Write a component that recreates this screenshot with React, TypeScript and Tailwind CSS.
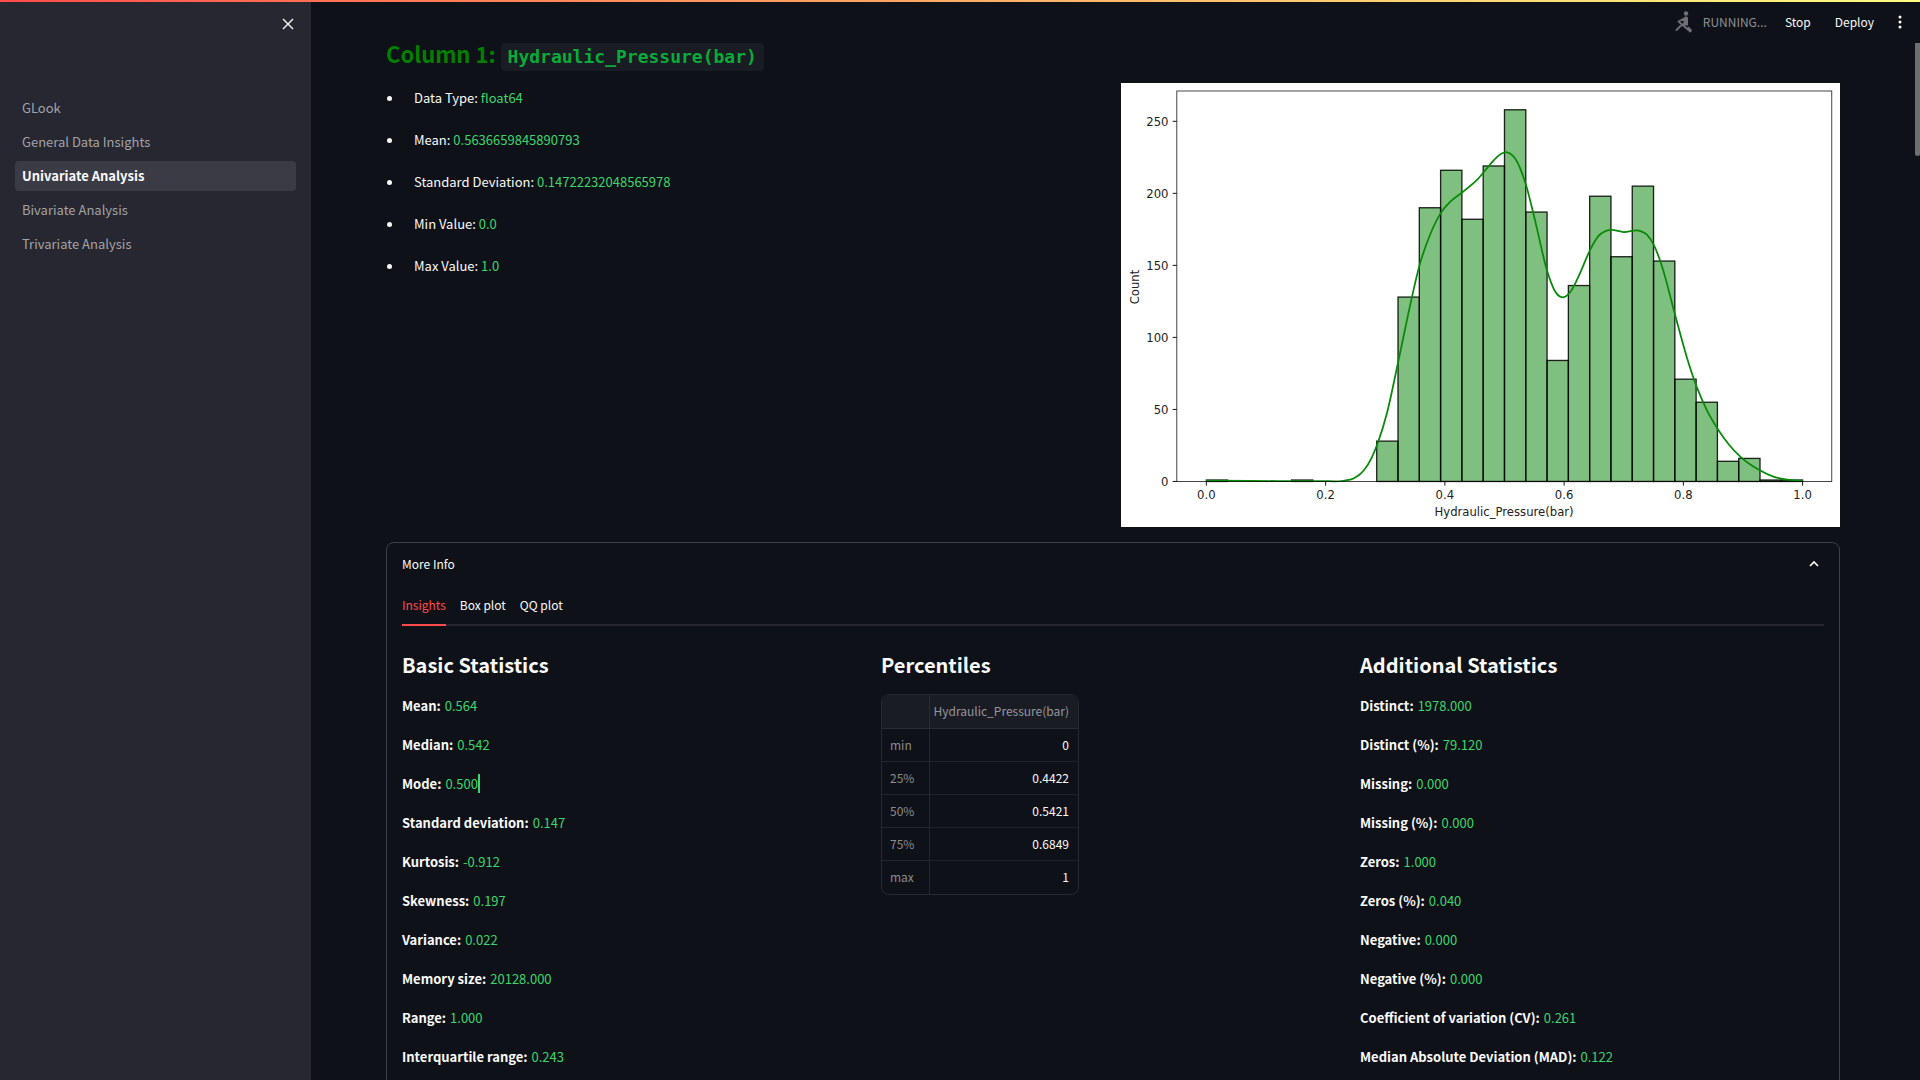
import React from "react";

const navItems = [
  { label: "GLook", active: false },
  { label: "General Data Insights", active: false },
  { label: "Univariate Analysis", active: true },
  { label: "Bivariate Analysis", active: false },
  { label: "Trivariate Analysis", active: false },
];

const summary = [
  ["Data Type:", "float64"],
  ["Mean:", "0.5636659845890793"],
  ["Standard Deviation:", "0.14722232048565978"],
  ["Min Value:", "0.0"],
  ["Max Value:", "1.0"],
];

const basicStats = [
  ["Mean:", "0.564"],
  ["Median:", "0.542"],
  ["Mode:", "0.500"],
  ["Standard deviation:", "0.147"],
  ["Kurtosis:", "-0.912"],
  ["Skewness:", "0.197"],
  ["Variance:", "0.022"],
  ["Memory size:", "20128.000"],
  ["Range:", "1.000"],
  ["Interquartile range:", "0.243"],
];

const additionalStats = [
  ["Distinct:", "1978.000"],
  ["Distinct (%):", "79.120"],
  ["Missing:", "0.000"],
  ["Missing (%):", "0.000"],
  ["Zeros:", "1.000"],
  ["Zeros (%):", "0.040"],
  ["Negative:", "0.000"],
  ["Negative (%):", "0.000"],
  ["Coefficient of variation (CV):", "0.261"],
  ["Median Absolute Deviation (MAD):", "0.122"],
];

const percentiles = [
  ["min", "0"],
  ["25%", "0.4422"],
  ["50%", "0.5421"],
  ["75%", "0.6849"],
  ["max", "1"],
];

const bins = [
  1, 0, 0, 0, 1, 0, 0, 0, 28, 128, 190, 216, 182, 219, 258, 187, 84, 136, 198,
  156, 205, 153, 71, 55, 14, 16, 1, 1,
];

const density: [number, number][] = [
  [0, 0.5], [0.118, 0.3], [0.196, 0.2], [0.23, 0.5], [0.247, 2.1],
  [0.2636, 7.4], [0.2776, 16.7], [0.2888, 28.2], [0.3027, 47.2],
  [0.3218, 83.1], [0.3419, 122.5], [0.3576, 150.2], [0.3755, 171.6],
  [0.3928, 186.1], [0.4091, 194.2], [0.4298, 200.9], [0.4538, 209.3],
  [0.4762, 220.1], [0.4902, 226.2], [0.5042, 228.5], [0.5182, 224],
  [0.5361, 205.8], [0.5518, 180.3], [0.5713, 146.5], [0.5853, 131.7],
  [0.5976, 127.8], [0.6116, 132.2], [0.6273, 145.2], [0.643, 160.2],
  [0.6581, 170.6], [0.6749, 174.5], [0.7001, 173.1], [0.728, 173.8],
  [0.7392, 171.1], [0.751, 163.7], [0.7644, 149.1], [0.7862, 115.5],
  [0.8064, 85.4], [0.8221, 66], [0.84, 49], [0.8579, 36.3],
  [0.8763, 25.7], [0.8959, 17.1], [0.9289, 7.6], [0.9519, 3.2],
  [0.9743, 1.2], [1, 0.5],
];

const px = (v: number) => 102.5 + v * 716;
const py = (v: number) => 478.5 - v * 1.73;

function curvePath(points: [number, number][]) {
  const p = points.map(([x, y]) => [px(x), py(y)]);
  const secant = (i: number) => (p[i + 1][1] - p[i][1]) / (p[i + 1][0] - p[i][0]);
  const slope = (i: number) => {
    if (i === 0 || i === p.length - 1) return 0;
    const before = p[i][0] - p[i - 1][0];
    const after = p[i + 1][0] - p[i][0];
    return (secant(i - 1) * after + secant(i) * before) / (before + after);
  };
  let d = `M${p[0][0]},${p[0][1]}`;
  for (let i = 0; i < p.length - 1; i++) {
    const h = (p[i + 1][0] - p[i][0]) / 3;
    d += `C${p[i][0] + h},${p[i][1] + h * slope(i)} ${p[i + 1][0] - h},${
      p[i + 1][1] - h * slope(i + 1)
    } ${p[i + 1][0]},${p[i + 1][1]}`;
  }
  return d;
}

function Histogram() {
  return (
    <svg
      viewBox="0 0 864 533"
      role="img"
      aria-label="Histogram of Hydraulic_Pressure(bar)"
      className="block w-full bg-white font-['DejaVu_Sans',sans-serif] text-[14px]"
    >
      {bins.map((n, i) =>
        n > 0 ? (
          <rect
            key={i}
            x={px(i / 28)}
            y={py(n)}
            width={716 / 28}
            height={n * 1.73}
            fill="#008000"
            fillOpacity={0.5}
            stroke="#000"
            strokeOpacity={0.85}
            strokeWidth={1.6}
          />
        ) : null,
      )}
      <path d={curvePath(density)} fill="none" stroke="#088a08" strokeWidth={2.1} />
      <rect x={67} y={9.6} width={786.5} height={468.9} fill="none" stroke="#000" strokeOpacity={0.8} strokeWidth={1.1} />
      {[0, 50, 100, 150, 200, 250].map((v) => (
        <g key={v}>
          <line x1={62} x2={67} y1={py(v)} y2={py(v)} stroke="#000" strokeWidth={1.1} />
          <text x={57} y={py(v) + 5.4} textAnchor="end" fill="#222">
            {v}
          </text>
        </g>
      ))}
      {[0, 0.2, 0.4, 0.6, 0.8, 1].map((v) => (
        <g key={v}>
          <line x1={px(v)} x2={px(v)} y1={478.5} y2={483.5} stroke="#000" strokeWidth={1.1} />
          <text x={px(v)} y={499.5} textAnchor="middle" fill="#222">
            {v.toFixed(1)}
          </text>
        </g>
      ))}
      <text x={460} y={519.5} textAnchor="middle" fill="#222">
        Hydraulic_Pressure(bar)
      </text>
      <text transform="translate(22 245) rotate(-90)" textAnchor="middle" fill="#222">
        Count
      </text>
    </svg>
  );
}

function RunningIcon() {
  return (
    <svg viewBox="0 0 34 34" className="size-[34px] text-[#6f7075]" fill="currentColor" aria-hidden="true">
      <circle cx="17" cy="8.500" r="2.200" />
      <path d="M16.500 11.500q2.500-0.500 2.500 1.500v7.500h-4.500l-1-1 1.500-3-3-1z" />
      <path
        d="M17 12.500l-7.500 4 10 8.500M14.500 19.500l-3 1.500-4 4"
        stroke="currentColor"
        strokeWidth="1.800"
        strokeLinecap="round"
        strokeLinejoin="round"
        fill="none"
      />
      <path d="M17.500 23.500l2-2 3.500 3.500q-0.200 2.500-2.500 2.500z" />
    </svg>
  );
}

function StatList({ title, rows, caretOn }: { title: string; rows: string[][]; caretOn?: string }) {
  return (
    <section>
      <h3 className="text-[20px] leading-7 font-bold">{title}</h3>
      <dl className="mt-[15px] flex flex-col gap-[15px]">
        {rows.map(([label, value]) => (
          <div key={label} className="flex h-6 items-center gap-1">
            <dt className="font-bold">{label}</dt>
            <dd
              className={
                label === caretOn
                  ? "border-r-2 border-[#3dd56d] leading-[19px] text-[#3dd56d]"
                  : "text-[#3dd56d]"
              }
            >
              {value}
            </dd>
          </div>
        ))}
      </dl>
    </section>
  );
}

export default function App() {
  return (
    <div className="relative flex h-screen overflow-hidden bg-[#0e1117] font-['Noto_Sans_CJK_SC',sans-serif] text-[13px] leading-6 text-[#fafafa]">
      <div className="absolute inset-x-0 top-0 z-10 h-0.5 bg-linear-to-r from-[#ff4b4b] to-[#fffd80]" />

      <aside className="w-[311px] shrink-0 bg-[#262730] px-[15px]">
        <div className="flex h-[93px] justify-end pt-3">
          <button type="button" aria-label="Close sidebar" className="-mr-1 size-6">
            <svg viewBox="0 0 24 24" className="size-6" fill="none" stroke="currentColor" strokeWidth="1.400" aria-hidden="true">
              <path d="M7 7l10 10M17 7L7 17" />
            </svg>
          </button>
        </div>
        <nav className="flex flex-col gap-1">
          {navItems.map((item) => (
            <a
              key={item.label}
              href="#"
              className={
                item.active
                  ? "flex h-[30px] items-center rounded bg-[#3b3b46] px-[7px] font-bold"
                  : "flex h-[30px] items-center rounded px-[7px] text-[#a3a3a8]"
              }
            >
              {item.label}
            </a>
          ))}
        </nav>
      </aside>

      <main className="min-w-0 flex-1 pt-[35px] pr-20 pl-[75px]">
        <h2 className="flex h-9 items-end gap-[5px] text-[22px] leading-9 font-bold text-[#008000]">
          Column 1:
          <code className="flex h-7 items-center rounded bg-[#1a1c24] px-[7px] font-['DejaVu_Sans_Mono',monospace] text-[18px] text-[#09ab3b]">
            Hydraulic_Pressure(bar)
          </code>
        </h2>
        <div className="mt-3 grid grid-cols-2 gap-[15px]">
          <ul className="flex flex-col gap-[18px] pt-[3px]">
            {summary.map(([label, value]) => (
              <li key={label} className="flex items-center">
                <span className="mr-[22px] ml-px size-[5px] rounded-full bg-[#fafafa]" />
                <span>
                  {label} <span className="text-[#3dd56d]">{value}</span>
                </span>
              </li>
            ))}
          </ul>
          <Histogram />
        </div>

        <section className="mt-[15px] h-[800px] rounded-lg border border-[#3e4045] px-[15px]">
          <button type="button" aria-expanded="true" className="flex h-[42px] w-full items-center justify-between text-[12px]">
            More Info
            <svg viewBox="0 0 20 20" className="size-5" fill="none" stroke="currentColor" strokeWidth="1.700" aria-hidden="true">
              <path d="M6 12l4-4 4 4" />
            </svg>
          </button>
          <div role="tablist" className="mt-0.5 flex h-[39px] gap-3.5 border-b-2 border-[#262730] text-[12px]">
            <button type="button" role="tab" aria-selected="true" className="-mb-0.5 h-[39px] border-b-2 border-[#ff4b4b] text-[#ff4b4b]">
              Insights
            </button>
            <button type="button" role="tab" aria-selected="false">
              Box plot
            </button>
            <button type="button" role="tab" aria-selected="false">
              QQ plot
            </button>
          </div>
          <div className="mt-[25px] grid grid-cols-3 gap-[15px]">
            <StatList title="Basic Statistics" rows={basicStats} caretOn="Mode:" />
            <section>
              <h3 className="text-[20px] leading-7 font-bold">Percentiles</h3>
              <div className="mt-[15px] w-fit overflow-hidden rounded-lg border border-[#26282e]">
                <table className="w-[196px] table-fixed border-separate border-spacing-0 text-[12px] leading-4">
                  <thead>
                    <tr className="h-[34px] bg-[#1a1c24] text-[#95969b]">
                      <th aria-label="Percentile" className="w-12 border-r border-b border-[#2a2c33]" />
                      <th className="border-b border-[#2a2c33] pr-[9px] text-right font-normal">
                        Hydraulic_Pressure(bar)
                      </th>
                    </tr>
                  </thead>
                  <tbody className="[&>tr:last-child>*]:border-b-0">
                    {percentiles.map(([label, value]) => (
                      <tr key={label} className="h-[33px]">
                        <th className="border-r border-b border-[#24262d] pl-2 text-left font-normal text-[#8b8c91]">{label}</th>
                        <td className="border-b border-[#202229] pr-[9px] text-right">{value}</td>
                      </tr>
                    ))}
                  </tbody>
                </table>
              </div>
            </section>
            <StatList title="Additional Statistics" rows={additionalStats} />
          </div>
        </section>
      </main>

      <header className="absolute top-0 right-0 flex h-[43px] items-center pt-px pr-2.5 text-[12px]">
        <RunningIcon />
        <span className="text-[#8f9096]">RUNNING...</span>
        <button type="button" className="ml-[18px]">Stop</button>
        <button type="button" className="ml-6">Deploy</button>
        <button type="button" aria-label="Main menu" className="ml-4">
          <svg viewBox="0 0 20 20" className="size-5" fill="currentColor" aria-hidden="true">
            <circle cx="10" cy="5" r="1.500" />
            <circle cx="10" cy="10" r="1.500" />
            <circle cx="10" cy="15" r="1.500" />
          </svg>
        </button>
      </header>
      <div className="absolute top-[43px] right-0 h-[113px] w-[5px] rounded-b-full bg-[#6e6f73]" />
    </div>
  );
}
